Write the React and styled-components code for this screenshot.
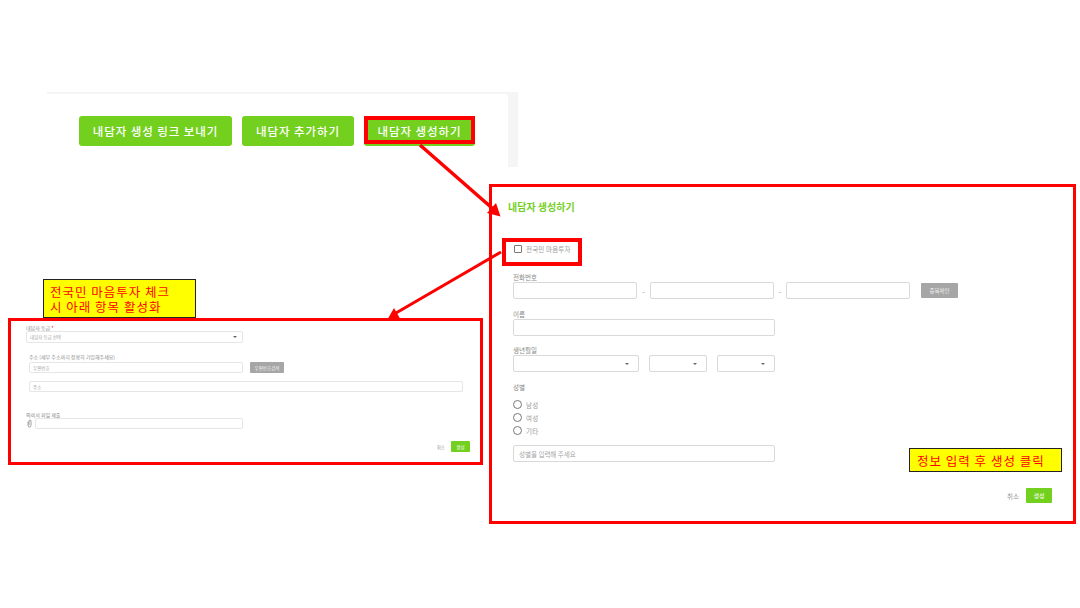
import React from 'react'
import styled, { createGlobalStyle } from 'styled-components'

const GlobalStyle = createGlobalStyle`
    html, body {
        margin: 0;
        padding: 0;
        background: #fff;
    }
    * {
        box-sizing: border-box;
    }
`

const Slide = styled.div`
    position: relative;
    width: 1080px;
    height: 608px;
    overflow: hidden;
    background: #fff;
    font-family: "Noto Sans CJK KR", "Noto Sans", sans-serif;
`

// top crop of the list page
const TopCrop = styled.div`
    position: absolute;
    left: 47px;
    top: 92px;
    width: 471px;
    height: 75px;
    padding: 2px 10px 0 0;
    background: #f5f5f5;
`

const TopCard = styled.div`
    display: flex;
    gap: 10px;
    height: 100%;
    padding: 22px 0 0 32px;
    background: #fff;
    border-radius: 0 3px 0 0;
`

const BigButton = styled.div`
    position: relative;
    display: flex;
    align-items: center;
    justify-content: center;
    width: ${p => p.$w}px;
    height: 30px;
    border-radius: 3px;
    background: #74d01f;
    color: #fff;
    font-size: 11.5px;
    font-weight: 500;
    letter-spacing: 0.9px;
`

const ButtonMark = styled.span`
    position: absolute;
    left: 0;
    top: 0;
    right: 0;
    bottom: 2px;
    border: 4px solid #f00;
`

const Panel = styled.div`
    position: absolute;
    left: ${p => p.$x}px;
    top: ${p => p.$y}px;
    width: ${p => p.$w}px;
    height: ${p => p.$h}px;
    border: 3px solid #f00;
    background: #fff;
`

const CreatePanel = styled(Panel)`
    padding: 14px 21px 0 16px;
`

const ActivatePanel = styled(Panel)`
    padding: 3px 10px 0 15px;
`

const Title = styled.div`
    height: 12px;
    font-size: 10px;
    line-height: 12px;
    font-weight: 700;
    color: #74d01f;
`

const CheckMark = styled.div`
    display: flex;
    align-items: flex-start;
    gap: 4px;
    width: 80px;
    height: 28px;
    margin: 25px 0 0 -6px;
    padding: 3px 0 0 8px;
    border: 4px solid #f00;
`

const CheckBox = styled.span`
    width: 8px;
    height: 8px;
    border: 1px solid #777;
    border-radius: 1px;
    flex: none;
`

const OptionText = styled.span`
    font-size: 6.5px;
    line-height: 8px;
    letter-spacing: 0.15px;
    color: #999;
    white-space: nowrap;
`

const Form = styled.div`
    display: flex;
    flex-direction: column;
    padding-left: 5px;
`

const Label = styled.div`
    height: ${p => p.$small ? 7 : 9}px;
    margin-top: ${p => p.$top || 0}px;
    font-size: ${p => p.$small ? 5 : 6.5}px;
    line-height: ${p => p.$small ? 7 : 9}px;
    color: #888;
    white-space: nowrap;
`

const Required = styled.span`
    color: #f00;
`

const Row = styled.div`
    display: flex;
    align-items: center;
    gap: ${p => p.$gap || 0}px;
    margin-top: ${p => p.$top || 0}px;
`

const Input = styled.div`
    display: flex;
    align-items: center;
    justify-content: space-between;
    flex: none;
    width: ${p => p.$w}px;
    height: 17px;
    margin-top: ${p => p.$top || 0}px;
    padding: 0 5px;
    border: 1px solid #d9d9d9;
    border-radius: 2px;
    background: #fff;
    font-size: 6.5px;
    color: #a5a5a5;
    white-space: nowrap;
`

const SmallInput = styled(Input)`
    height: ${p => p.$h || 11}px;
    padding: 0 3px;
    border-color: #e6e6e6;
    font-size: 4.5px;
`

// the little filled triangle of a select
const Caret = styled.span`
    width: 0;
    height: 0;
    margin-right: ${p => p.$right || 4}px;
    border-left: 2px solid transparent;
    border-right: 2px solid transparent;
    border-top: 2px solid #666;
`

const Dash = styled.span`
    width: ${p => p.$w}px;
    text-align: center;
    font-size: 7px;
    color: #888;
`

const GreyButton = styled.div`
    display: flex;
    align-items: center;
    justify-content: center;
    width: ${p => p.$w}px;
    height: ${p => p.$h}px;
    margin-left: ${p => p.$left || 0}px;
    border-radius: 1px;
    background: #a6a6a6;
    color: #eee;
    font-size: ${p => p.$size}px;
    white-space: nowrap;
`

const Radios = styled.div`
    display: flex;
    flex-direction: column;
    gap: 4px;
    margin-top: 8px;
`

const RadioRow = styled.div`
    display: flex;
    align-items: center;
    gap: 4px;
    height: 9px;
`

const RadioDot = styled.span`
    width: 9px;
    height: 9px;
    border: 1px solid #777;
    border-radius: 50%;
`

const Footer = styled.div`
    display: flex;
    align-items: center;
    justify-content: flex-end;
    gap: ${p => p.$gap}px;
    margin-top: ${p => p.$top}px;
`

const CancelText = styled.span`
    font-size: ${p => p.$size}px;
    color: #999;
`

const SaveButton = styled.div`
    display: flex;
    align-items: center;
    justify-content: center;
    width: ${p => p.$w}px;
    height: ${p => p.$h}px;
    border-radius: 1px;
    background: #74d01f;
    color: #fff;
    font-size: ${p => p.$size}px;
`

const AddressBlock = styled.div`
    padding-left: 3px;
`

const ClipIcon = styled.svg`
    width: 5px;
    height: 9px;
    margin-left: 1px;
    flex: none;
`

const Note = styled.div`
    position: absolute;
    left: ${p => p.$x}px;
    top: ${p => p.$y}px;
    width: ${p => p.$w}px;
    height: ${p => p.$h}px;
    padding: ${p => p.$pad};
    border: 1px solid #222;
    background: #ff0;
    color: #f00;
    font-size: 12.5px;
    line-height: 15px;
    letter-spacing: 1px;
    white-space: pre-line;
    z-index: 3;
`

const Arrows = styled.svg`
    position: absolute;
    left: 0;
    top: 0;
    width: 1080px;
    height: 608px;
    pointer-events: none;
    z-index: 2;
`

function App() {
    return (
        <Slide>
            <GlobalStyle />

            {/* buttons from the list page */}
            <TopCrop>
                <TopCard>
                    <BigButton $w={153}>내담자 생성 링크 보내기</BigButton>
                    <BigButton $w={112}>내담자 추가하기</BigButton>
                    <BigButton $w={111}>
                        내담자 생성하기
                        <ButtonMark />
                    </BigButton>
                </TopCard>
            </TopCrop>

            {/* create form */}
            <CreatePanel $x={489} $y={184} $w={587} $h={340}>
                <Title>내담자 생성하기</Title>
                <CheckMark>
                    <CheckBox />
                    <OptionText>전국민 마음투자</OptionText>
                </CheckMark>
                <Form>
                    <Label $top={7}>전화번호</Label>
                    <Row>
                        <Input $w={124} />
                        <Dash $w={13}>-</Dash>
                        <Input $w={124} />
                        <Dash $w={12}>-</Dash>
                        <Input $w={124} />
                        <GreyButton $w={37} $h={15} $left={11} $size={5.5}>중복확인</GreyButton>
                    </Row>
                    <Label $top={11}>이름</Label>
                    <Input $w={262} />
                    <Label $top={10}>생년월일</Label>
                    <Row $gap={10}>
                        <Input $w={126}><span /><Caret /></Input>
                        <Input $w={58}><span /><Caret /></Input>
                        <Input $w={58}><span /><Caret /></Input>
                    </Row>
                    <Label $top={11}>성별</Label>
                    <Radios>
                        <RadioRow><RadioDot /><OptionText>남성</OptionText></RadioRow>
                        <RadioRow><RadioDot /><OptionText>여성</OptionText></RadioRow>
                        <RadioRow><RadioDot /><OptionText>기타</OptionText></RadioRow>
                    </Radios>
                    <Input $w={262} $top={10}>성별을 입력해 주세요</Input>
                    <Footer $gap={7} $top={26}>
                        <CancelText $size={6.5}>취소</CancelText>
                        <SaveButton $w={26} $h={15} $size={6}>생성</SaveButton>
                    </Footer>
                </Form>
            </CreatePanel>

            {/* fields enabled by the checkbox */}
            <ActivatePanel $x={8} $y={318} $w={475} $h={147}>
                <Label $small>내담자 등급 <Required>*</Required></Label>
                <SmallInput $w={217} $h={12}>내담자 등급 선택<Caret $right={2} /></SmallInput>
                <AddressBlock>
                    <Label $small $top={10}>주소 (세부 주소까지 정확히 기입해주세요)</Label>
                    <Row $top={2} $gap={7}>
                        <SmallInput $w={214}>우편번호</SmallInput>
                        <GreyButton $w={34} $h={11} $size={4.5}>우편번호검색</GreyButton>
                    </Row>
                    <SmallInput $w={434} $top={8}>주소</SmallInput>
                </AddressBlock>
                <Label $small $top={19}>의뢰서 파일 제출</Label>
                <Row $gap={3}>
                    <ClipIcon viewBox="0 0 5 9" fill="none" stroke="#888" strokeWidth="0.8">
                        <path d="M1 2.5v4a1.5 1.5 0 0 0 3 0V2a1 1 0 0 0-2 0v4.2" />
                    </ClipIcon>
                    <SmallInput $w={208} />
                </Row>
                <Footer $gap={6} $top={12}>
                    <CancelText $size={4.5}>취소</CancelText>
                    <SaveButton $w={19} $h={11} $size={4.5}>생성</SaveButton>
                </Footer>
            </ActivatePanel>

            <Arrows viewBox="0 0 1080 608">
                <line x1="420" y1="145" x2="492" y2="208" stroke="#f00" strokeWidth="3.5" />
                <polygon points="500.5,216.5 487,213 496,203" fill="#f00" />
                <line x1="501" y1="252" x2="396" y2="313" stroke="#f00" strokeWidth="3" />
                <polygon points="388,318.5 394,308 400,318.5" fill="#f00" />
            </Arrows>

            <Note $x={43} $y={279} $w={153} $h={39} $pad="4px 0 0 6px">
                {'전국민 마음투자 체크\n시 아래 항목 활성화'}
            </Note>
            <Note $x={909} $y={448} $w={153} $h={24} $pad="4px 0 0 7px">
                정보 입력 후 생성 클릭
            </Note>
        </Slide>
    )
}

export default App
